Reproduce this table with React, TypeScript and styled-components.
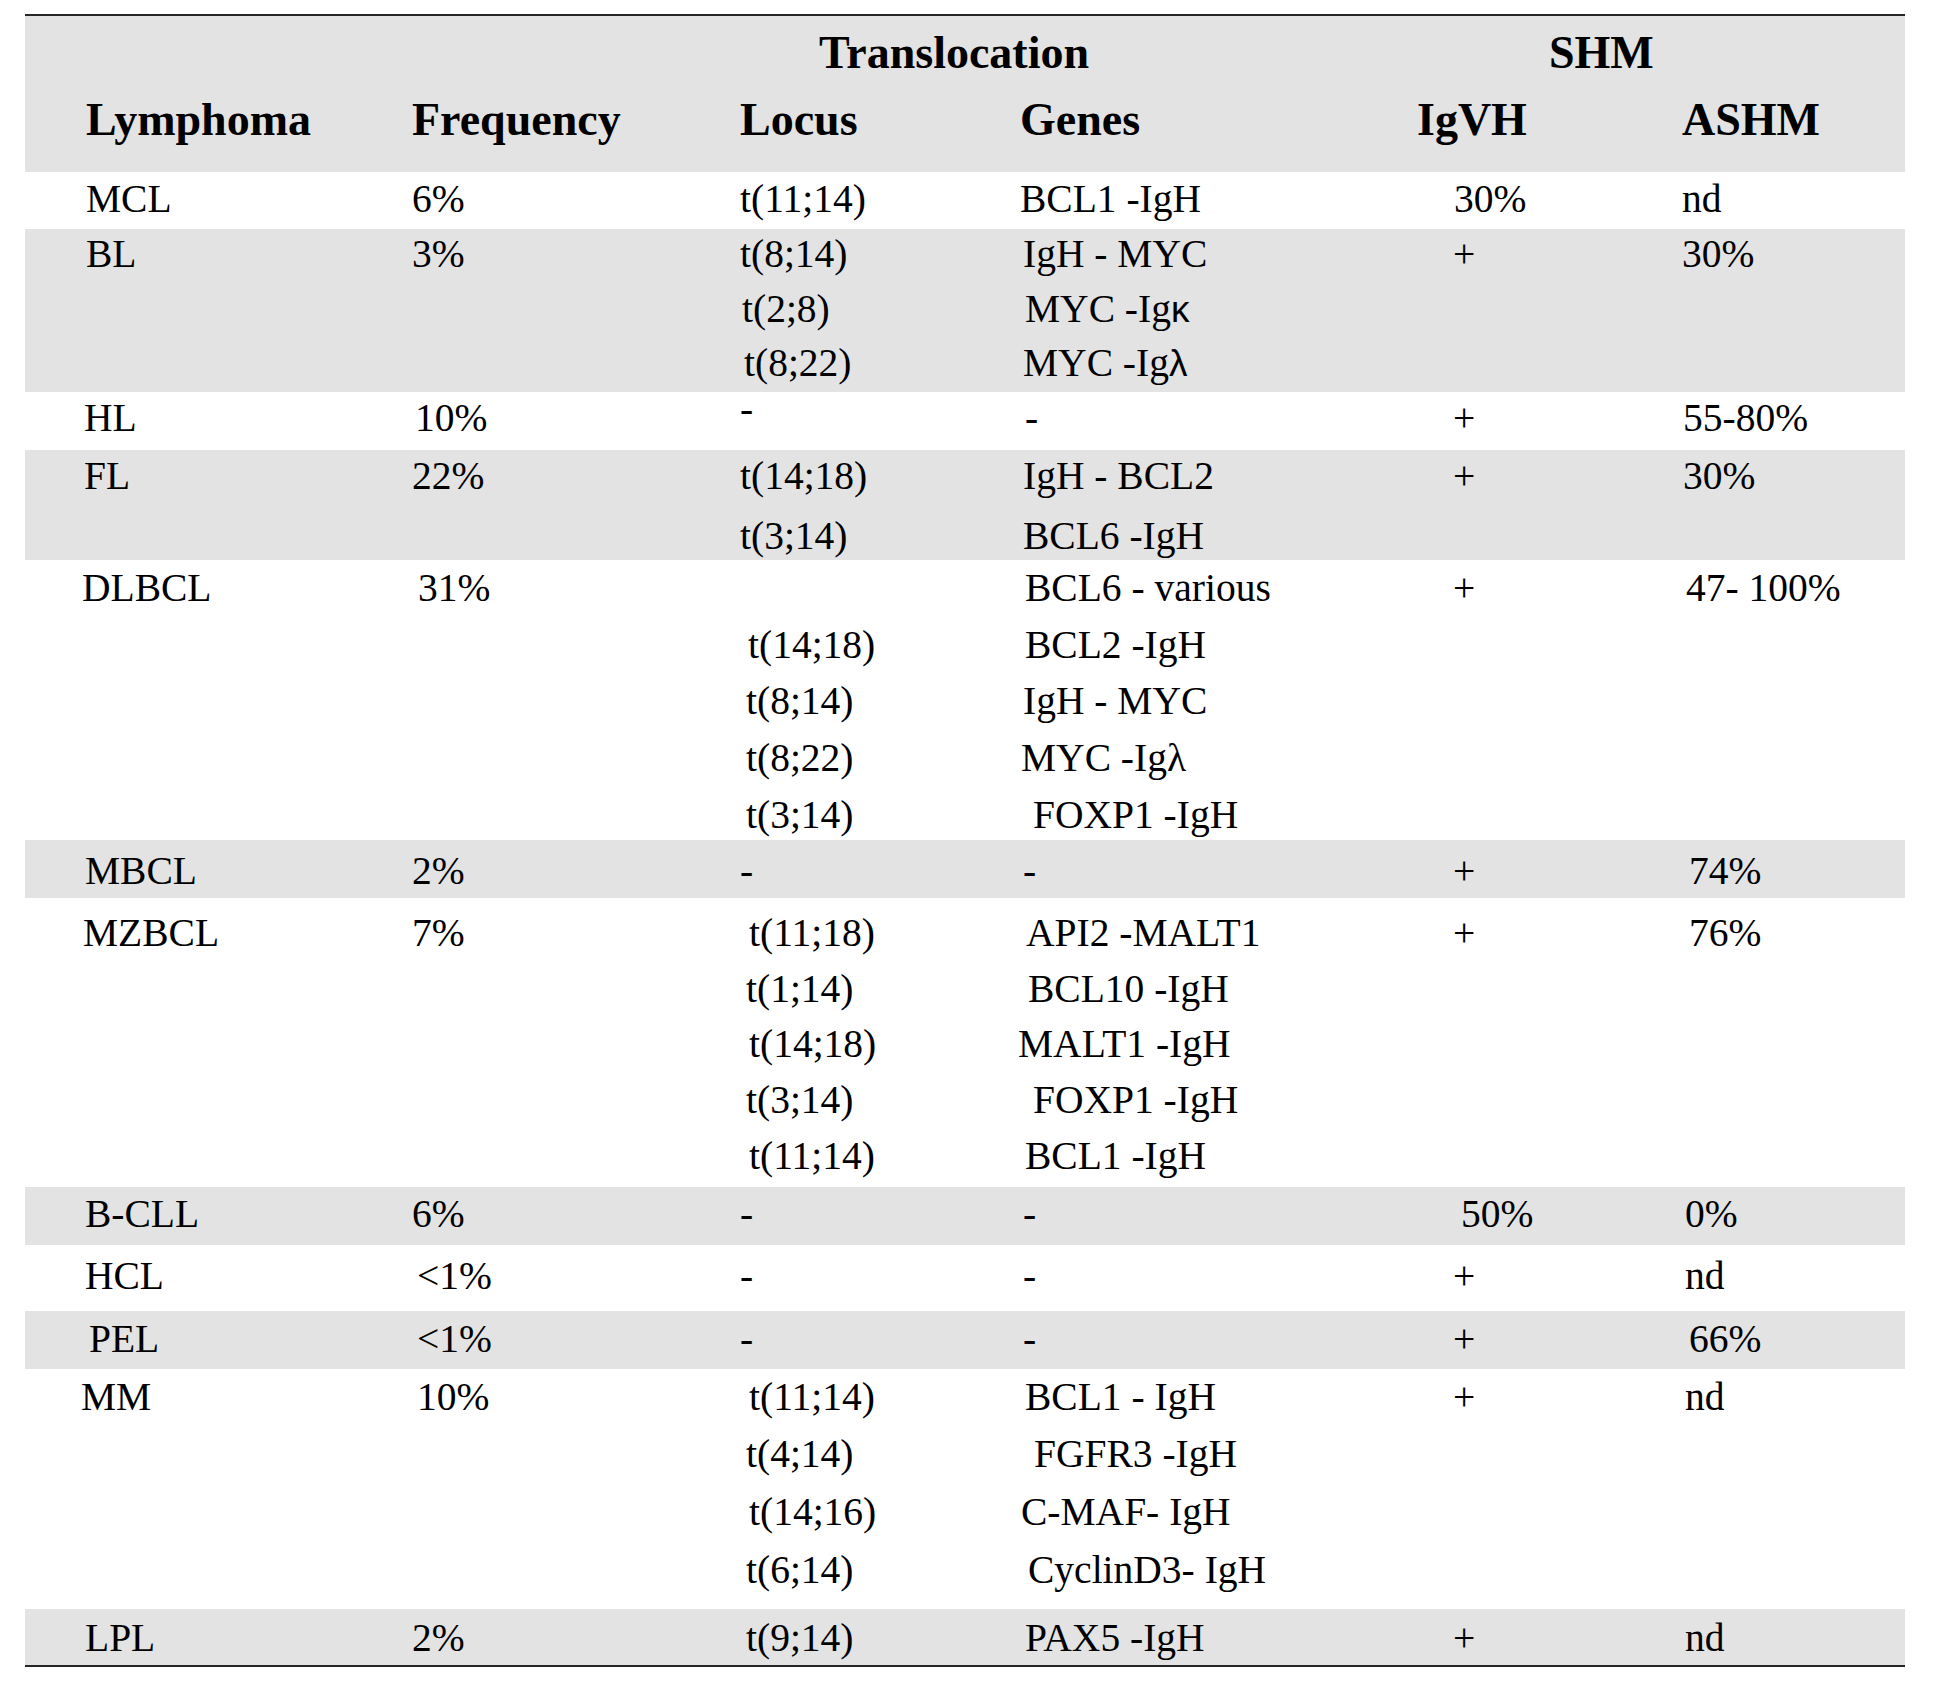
import React from "react";
import styled, { createGlobalStyle } from "styled-components";

const GlobalStyle = createGlobalStyle`
  html, body {
    margin: 0;
    padding: 0;
    background: #fff;
  }
  body {
    font-family: "Liberation Serif", "Times New Roman", serif;
    color: #000;
  }
`;

// column starts: 25, 412, 740, 1017, 1417, 1682 (table ends at 1905)
const COLS = "387px 328px 277px 400px 265px 223px";
const SHADE = "#e3e3e3";

const Page = styled.div`
  padding: 14px 0 0 25px;
`;

const Table = styled.div`
  width: 1880px;
  border-top: 2px solid #262626;
  border-bottom: 2px solid #262626;
`;

const Head = styled.div`
  background: ${SHADE};
  height: 156px;
  box-sizing: border-box;
  padding-top: 12px;
  font-size: 46px;
  font-weight: bold;
  line-height: 50px;
`;

const HeadLine = styled.div<{ $gap?: number }>`
  display: grid;
  grid-template-columns: ${COLS};
  margin-top: ${(p) => p.$gap ?? 0}px;
`;

const Group = styled.div<{ $from: number; $x: number }>`
  grid-column: ${(p) => p.$from} / span 2;
  padding-left: ${(p) => p.$x}px;
`;

const HeadCell = styled.div<{ $x?: number }>`
  padding-left: ${(p) => p.$x ?? 0}px;
  white-space: pre;
`;

const Row = styled.div<{ $shade: boolean; $h: number; $pad: number }>`
  display: grid;
  grid-template-columns: ${COLS};
  align-items: start;
  box-sizing: border-box;
  height: ${(p) => p.$h}px;
  padding-top: ${(p) => p.$pad}px;
  background: ${(p) => (p.$shade ? SHADE : "#fff")};
  font-size: 39.5px;
  line-height: 40px;
`;

const Cell = styled.div<{ $gap?: number }>`
  display: flex;
  flex-direction: column;
  gap: ${(p) => p.$gap ?? 0}px;
`;

const Text = styled.div<{ $x?: number; $raise?: number }>`
  height: 40px;
  padding-left: ${(p) => p.$x ?? 0}px;
  white-space: pre;
  transform: translateY(${(p) => -(p.$raise ?? 0)}px);
`;

const Greek = styled.span`
  font-family: "Liberation Sans", Arial, sans-serif;
  font-size: 37px;
`;

type Item = { t: React.ReactNode; x: number; raise?: number };

const c = (t: React.ReactNode, x = 0, raise = 0): Item => ({ t, x, raise });

type RowData = {
  shade: boolean;
  h: number;
  pad: number;
  gap?: number;
  name: Item;
  freq: Item;
  locus: Item[];
  genes: Item[];
  igvh: Item;
  ashm: Item;
};

const rows: RowData[] = [
  {
    shade: false, h: 57, pad: 6.5,
    name: c("MCL", 61), freq: c("6%"),
    locus: [c("t(11;14)")], genes: [c("BCL1 -IgH", 3)],
    igvh: c("30%", 37), ashm: c("nd"),
  },
  {
    shade: true, h: 163, pad: 5.3, gap: 14.5,
    name: c("BL", 61), freq: c("3%"),
    locus: [c("t(8;14)"), c("t(2;8)", 2), c("t(8;22)", 4)],
    genes: [
      c("IgH - MYC", 6),
      c(<>MYC -Ig<Greek>κ</Greek></>, 8),
      c(<>MYC -Ig<Greek>λ</Greek></>, 6),
    ],
    igvh: c("+", 36), ashm: c("30%"),
  },
  {
    shade: false, h: 58, pad: 5.5,
    name: c("HL", 59), freq: c("10%", 3),
    locus: [c("-", 0, 9)], genes: [c("-", 8)],
    igvh: c("+", 36), ashm: c("55-80%", 1),
  },
  {
    shade: true, h: 110, pad: 5.8, gap: 20,
    name: c("FL", 59), freq: c("22%"),
    locus: [c("t(14;18)"), c("t(3;14)")],
    genes: [c("IgH - BCL2", 6), c("BCL6 -IgH", 6)],
    igvh: c("+", 36), ashm: c("30%", 1),
  },
  {
    shade: false, h: 280, pad: 7.8, gap: 16.75,
    name: c("DLBCL", 57), freq: c("31%", 6),
    locus: [c(""), c("t(14;18)", 8), c("t(8;14)", 6), c("t(8;22)", 6), c("t(3;14)", 6)],
    genes: [
      c("BCL6 - various", 8),
      c("BCL2 -IgH", 8),
      c("IgH - MYC", 6),
      c("MYC -Igλ", 4),
      c("FOXP1 -IgH", 16),
    ],
    igvh: c("+", 36), ashm: c("47- 100%", 4),
  },
  {
    shade: true, h: 58, pad: 10.8,
    name: c("MBCL", 60), freq: c("2%"),
    locus: [c("-")], genes: [c("-", 6)],
    igvh: c("+", 36), ashm: c("74%", 7),
  },
  {
    shade: false, h: 289, pad: 14.8, gap: 15.75,
    name: c("MZBCL", 58), freq: c("7%"),
    locus: [c("t(11;18)", 9), c("t(1;14)", 6), c("t(14;18)", 9), c("t(3;14)", 6), c("t(11;14)", 9)],
    genes: [
      c("API2 -MALT1", 9),
      c("BCL10 -IgH", 11),
      c("MALT1 -IgH", 1),
      c("FOXP1 -IgH", 16),
      c("BCL1 -IgH", 8),
    ],
    igvh: c("+", 36), ashm: c("76%", 7),
  },
  {
    shade: true, h: 58, pad: 6.8,
    name: c("B-CLL", 60), freq: c("6%"),
    locus: [c("-")], genes: [c("-", 6)],
    igvh: c("50%", 44), ashm: c("0%", 3),
  },
  {
    shade: false, h: 66, pad: 10.8,
    name: c("HCL", 60), freq: c("<1%", 5),
    locus: [c("-")], genes: [c("-", 6)],
    igvh: c("+", 36), ashm: c("nd", 3),
  },
  {
    shade: true, h: 58, pad: 7.8,
    name: c("PEL", 64), freq: c("<1%", 5),
    locus: [c("-")], genes: [c("-", 6)],
    igvh: c("+", 36), ashm: c("66%", 7),
  },
  {
    shade: false, h: 240, pad: 7.8, gap: 17.7,
    name: c("MM", 56), freq: c("10%", 5),
    locus: [c("t(11;14)", 9), c("t(4;14)", 6), c("t(14;16)", 9), c("t(6;14)", 6)],
    genes: [
      c("BCL1 - IgH", 8),
      c("FGFR3 -IgH", 17),
      c("C-MAF- IgH", 4),
      c("CyclinD3- IgH", 11),
    ],
    igvh: c("+", 36), ashm: c("nd", 3),
  },
  {
    shade: true, h: 56, pad: 8.8,
    name: c("LPL", 60), freq: c("2%"),
    locus: [c("t(9;14)", 6)], genes: [c("PAX5 -IgH", 8)],
    igvh: c("+", 36), ashm: c("nd", 3),
  },
];

function Lines({ items, gap }: { items: Item[]; gap?: number }) {
  return (
    <Cell $gap={gap}>
      {items.map((it, i) => (
        <Text key={i} $x={it.x} $raise={it.raise}>
          {it.t}
        </Text>
      ))}
    </Cell>
  );
}

export default function App() {
  return (
    <>
      <GlobalStyle />
      <Page>
        <Table>
          <Head>
            <HeadLine>
              <Group $from={3} $x={79}>Translocation</Group>
              <Group $from={5} $x={132}>SHM</Group>
            </HeadLine>
            <HeadLine $gap={17}>
              <HeadCell $x={61}>Lymphoma</HeadCell>
              <HeadCell>Frequency</HeadCell>
              <HeadCell>Locus</HeadCell>
              <HeadCell $x={3}>Genes</HeadCell>
              <HeadCell>IgVH</HeadCell>
              <HeadCell>ASHM</HeadCell>
            </HeadLine>
          </Head>

          {rows.map((r) => (
            <Row key={r.name.t as string} $shade={r.shade} $h={r.h} $pad={r.pad}>
              <Lines items={[r.name]} />
              <Lines items={[r.freq]} />
              <Lines items={r.locus} gap={r.gap} />
              <Lines items={r.genes} gap={r.gap} />
              <Lines items={[r.igvh]} />
              <Lines items={[r.ashm]} />
            </Row>
          ))}
        </Table>
      </Page>
    </>
  );
}
